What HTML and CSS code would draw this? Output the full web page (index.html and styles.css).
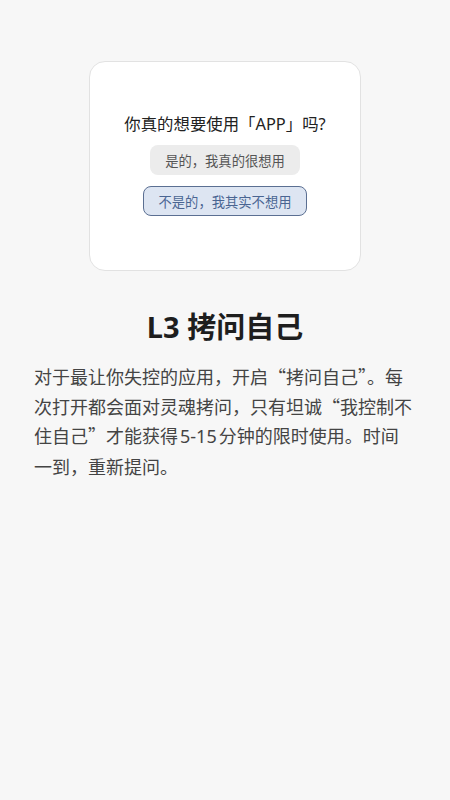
FILE: index.html
```html
<!DOCTYPE html>
<html lang="zh">
<head>
<meta charset="utf-8">
<link rel="stylesheet" href="styles.css">
</head>
<body>
<main class="page">
  <section class="card">
    <div class="question">你真的想要使用「APP」吗?</div>
    <div class="btn btn-yes">是的，我真的很想用</div>
    <div class="btn btn-no">不是的，我其实不想用</div>
  </section>
  <h1 class="title">L3 拷问自己</h1>
  <p class="desc">对于最让你失控的应用，开启“拷问自己”。每次打开都会面对灵魂拷问，只有坦诚“我控制不住自己”才能获得<span class="num">5-15</span>分钟的限时使用。时间一到，重新提问。</p>
</main>
</body>
</html>
```
FILE: styles.css
```css
html, body {
  margin: 0;
  padding: 0;
  background: #f7f7f7;
}
body {
  width: 450px;
  height: 800px;
  font-family: "Noto Sans", "Noto Sans CJK SC", sans-serif;
}
.page {
  display: flex;
  flex-direction: column;
  align-items: center;
  padding-top: 61px;
}
.card {
  box-sizing: border-box;
  width: 272px;
  height: 210px;
  background: #ffffff;
  border: 1px solid #e2e2e2;
  border-radius: 16px;
  display: flex;
  flex-direction: column;
  align-items: center;
  justify-content: center;
  padding-bottom: 3px;
}
.question {
  font-size: 16.4px;
  line-height: 22px;
  color: #222;
  margin-bottom: 10px;
}
.btn {
  box-sizing: border-box;
  height: 30px;
  display: flex;
  align-items: center;
  justify-content: center;
  font-size: 13.3px;
  border-radius: 8px;
}
.btn-yes {
  width: 150px;
  background: #ececec;
  color: #555;
  margin-bottom: 11px;
}
.btn-no {
  width: 164px;
  background: #dde5f2;
  border: 1.5px solid #5b6f92;
  color: #4a6592;
}
.title {
  margin: 38px 0 0;
  font-size: 29px;
  line-height: 36px;
  font-weight: 700;
  color: #1e1e1e;
}
.desc {
  box-sizing: border-box;
  width: 100%;
  margin: 17px 0 0;
  padding: 0 37px 0 34px;
  font-family: "Noto Sans CJK SC", "Noto Sans", sans-serif;
  font-size: 18px;
  line-height: 29.5px;
  color: #444;
}
.num {
  font-family: "Noto Sans", sans-serif;
  padding: 0 2px;
}
```
